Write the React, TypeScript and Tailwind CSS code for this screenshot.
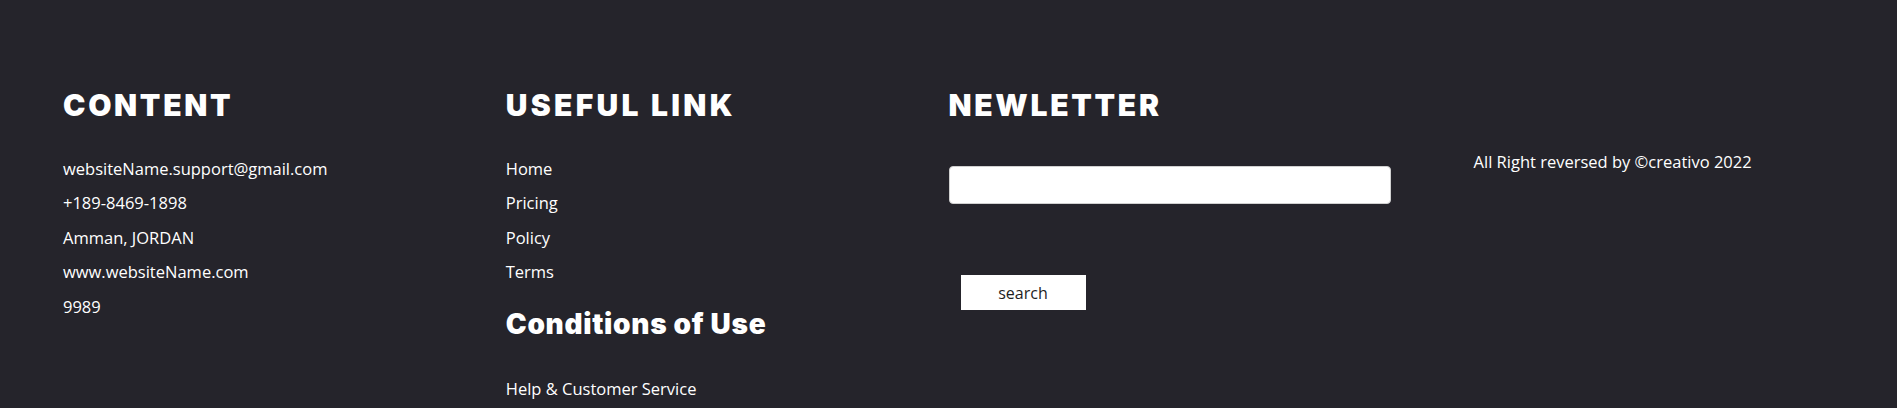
export default function App() {
  const contact = [
    "websiteName.support@gmail.com",
    "+189-8469-1898",
    "Amman, JORDAN",
    "www.websiteName.com",
    "9989",
  ];
  const links = ["Home", "Pricing", "Policy", "Terms"];

  const heading =
    "text-[30px] leading-[36px] font-black text-white uppercase";
  const body = "text-[16.5px] leading-[34.4px] text-white";

  return (
    <footer
      className="w-full h-[408px] bg-[#25242b] overflow-hidden"
      style={{ fontFamily: '"Open Sans", "Noto Sans", sans-serif' }}
    >
      <div className="grid grid-cols-4 px-[63px] pt-[87px]">
        {/* Content */}
        <div>
          <h2
            className={`${heading} tracking-[0.09em]`}
            style={{ fontFamily: "Inter, sans-serif" }}
          >
            Content
          </h2>
          <ul className="mt-[29px]">
            {contact.map((item) => (
              <li key={item} className={body}>
                {item}
              </li>
            ))}
          </ul>
        </div>

        {/* Useful links */}
        <div>
          <h2
            className={`${heading} tracking-[0.11em]`}
            style={{ fontFamily: "Inter, sans-serif" }}
          >
            Useful Link
          </h2>
          <ul className="mt-[29px]">
            {links.map((item) => (
              <li key={item} className={body}>
                <a href="#">{item}</a>
              </li>
            ))}
          </ul>
          <h3
            className="mt-[18px] text-[28px] leading-[33.6px] font-black tracking-[0.025em] text-white"
            style={{ fontFamily: "Inter, sans-serif" }}
          >
            Conditions of Use
          </h3>
          <p className={`mt-[31px] ${body}`}>
            <a href="#">Help &amp; Customer Service</a>
          </p>
        </div>

        {/* Newsletter */}
        <div>
          <h2
            className={`${heading} tracking-[0.09em]`}
            style={{ fontFamily: "Inter, sans-serif" }}
          >
            Newletter
          </h2>
          <input
            type="text"
            className="mt-[43px] block w-full h-[38px] bg-white rounded-[4px] border border-[#d0d0d0] px-3 text-black outline-none"
          />
          <button className="mt-[71px] ml-[12px] block w-[125px] h-[35px] bg-white text-[16px] text-[#1e1e1e]">
            search
          </button>
        </div>

        {/* Copyright */}
        <div className="text-center">
          <p className={`mt-[58px] ${body}`}>All Right reversed by ©creativo 2022</p>
        </div>
      </div>
    </footer>
  );
}
